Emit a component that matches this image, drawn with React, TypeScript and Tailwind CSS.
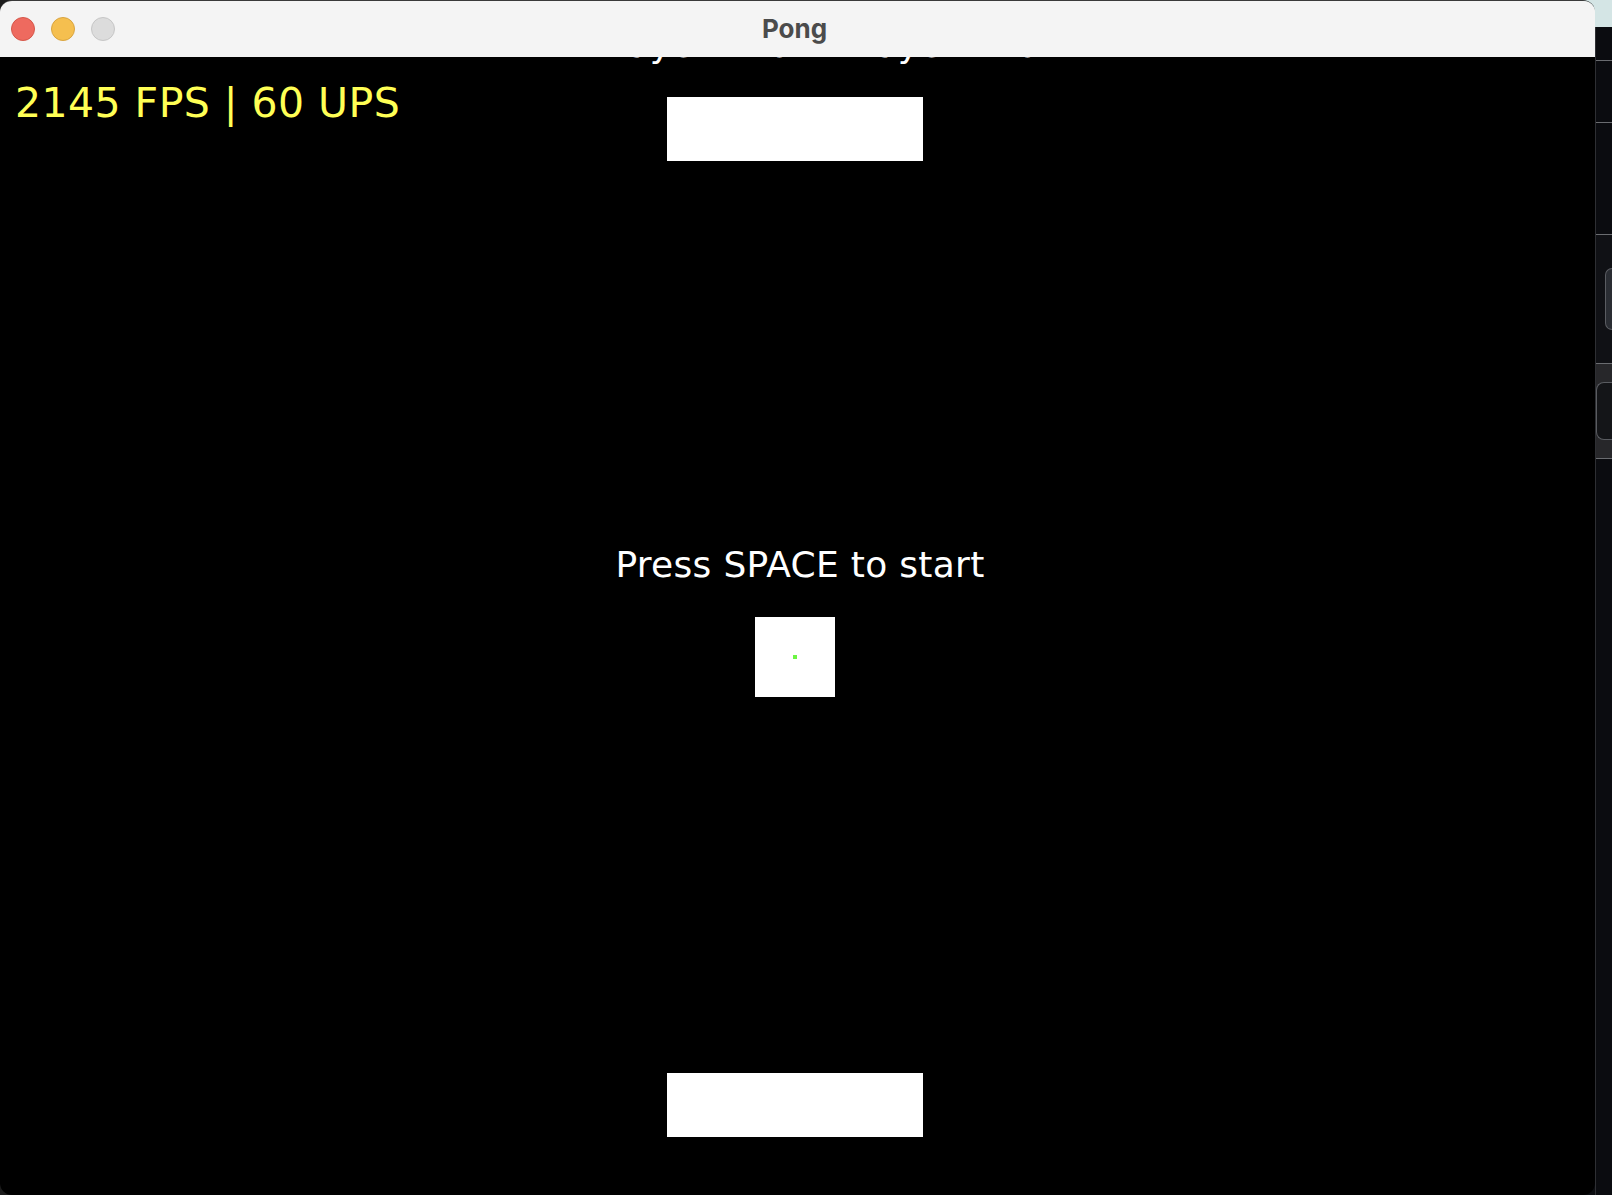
import React from "react";

function TitleBar() {
  return (
    <div className="h-[56px] shrink-0 bg-[#f4f4f4] grid grid-cols-[1fr_auto_1fr] items-center">
      {/* traffic lights */}
      <div className="flex items-center gap-4 pl-[11px]">
        <span className="w-6 h-6 rounded-full bg-[#ee6a5f] border border-[#d5574a]" />
        <span className="w-6 h-6 rounded-full bg-[#f5bf4f] border border-[#d9a440]" />
        <span className="w-6 h-6 rounded-full bg-[#dcdcdc] border border-[#c6c6c6]" />
      </div>
      <div className="mr-[6px] font-['Inter',sans-serif] font-bold text-[26px] leading-[26px] text-[#4b4b4b]">
        Pong
      </div>
      <div />
    </div>
  );
}

function GameCanvas() {
  return (
    <div className="relative flex-1 bg-black overflow-hidden flex flex-col items-center font-['DejaVu_Sans',sans-serif]">
      {/* score line, mostly hidden under the title bar */}
      <div className="self-start ml-[595px] -mt-[30px] h-[36px] flex gap-[52px] text-[36px] leading-[36px] tracking-[0.3px] text-white whitespace-pre">
        <span>Player 1: 0</span>
        <span>Player 2: 0</span>
      </div>

      {/* top paddle */}
      <div className="mt-[34px] mr-[5px] w-[256px] h-[64px] bg-white" />

      <div className="mt-[386px] ml-[5px] h-[36px] text-[36px] leading-[36px] tracking-[0.3px] text-white whitespace-nowrap">
        Press SPACE to start
      </div>

      {/* ball */}
      <div className="mt-[34px] mr-[5px] w-[80px] h-[80px] bg-white flex items-center justify-center">
        <span className="w-1 h-1 bg-[#6cf542]" />
      </div>

      {/* bottom paddle */}
      <div className="mt-[376px] mr-[5px] w-[256px] h-[64px] bg-white" />

      {/* fps overlay */}
      <div className="absolute left-[15px] top-[26px] text-[41px] leading-[41px] tracking-[0.45px] text-[#ffff55] whitespace-pre">
        2145 FPS | 60 UPS
      </div>
    </div>
  );
}

function SideStrip() {
  return (
    <div className="flex-1 flex flex-col">
      <div className="h-[27px] bg-[#d4e5e5]" />
      <div className="flex-1 flex flex-col border-l border-[#2e2f33] bg-[#0b0c10]">
        <div className="h-[33px]" />
        <div className="h-px bg-[#6a6c70]" />
        <div className="h-[61px]" />
        <div className="h-px bg-[#6a6c70]" />
        <div className="h-[111px]" />
        <div className="h-px bg-[#6a6c70]" />
        <div className="h-[128px] flex flex-col justify-center pl-[9px] bg-[#101115]">
          <div className="h-[62px] rounded-l-[8px] border border-r-0 border-[#5a5c61] bg-[#2a2d33]" />
        </div>
        <div className="h-px bg-[#6a6c70]" />
        <div className="h-[94px] bg-[#27272a] flex flex-col justify-center">
          <div className="h-[58px] rounded-l-[8px] border border-r-0 border-[#5a5c61] bg-[#141518]" />
        </div>
        <div className="h-px bg-[#6a6c70]" />
        <div className="flex-1" />
      </div>
    </div>
  );
}

export default function App() {
  return (
    <div className="w-[1612px] h-[1195px] flex overflow-hidden bg-[linear-gradient(to_right,#1c1c1c_800px,transparent_800px),linear-gradient(to_bottom,#d4e5e5_27px,#0b0c10_27px)]">
      <div className="w-[1595px] h-full shrink-0 flex flex-col rounded-[12px] overflow-hidden border-t border-[#3a3a3a]">
        <TitleBar />
        <GameCanvas />
      </div>
      <SideStrip />
    </div>
  );
}
